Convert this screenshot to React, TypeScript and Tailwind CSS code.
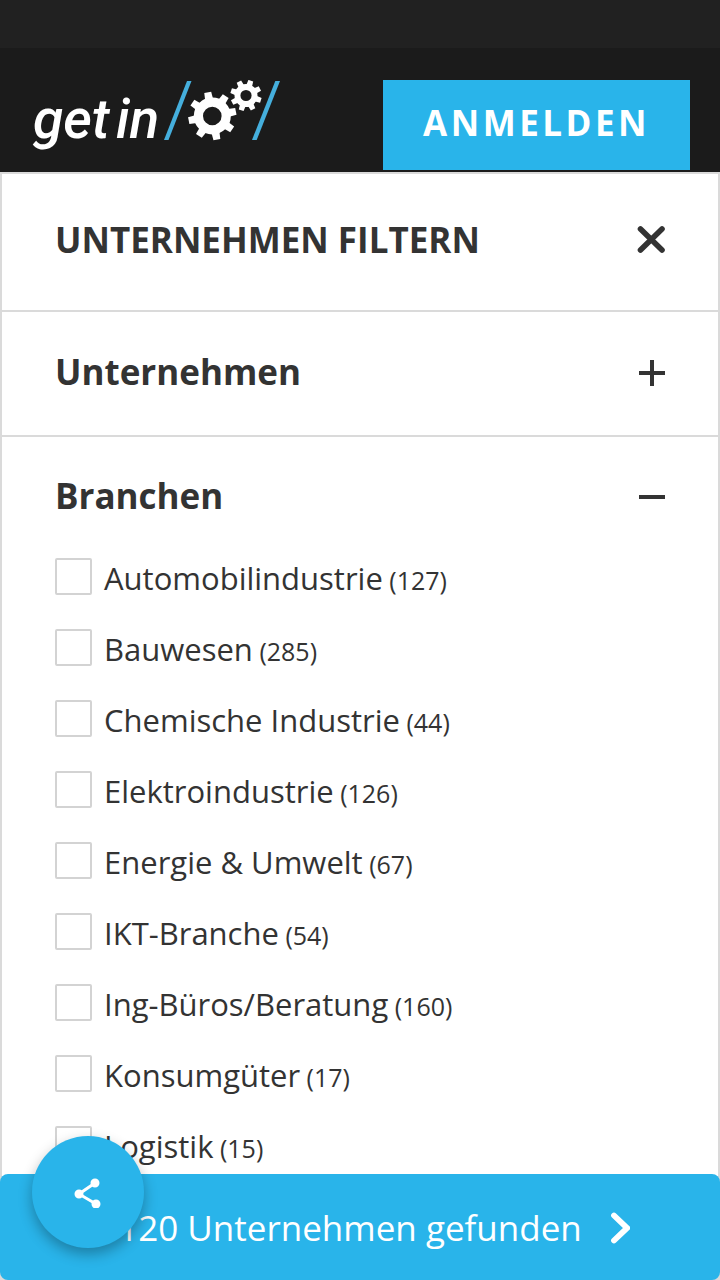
import { useState } from 'react'

interface Branch {
  name: string
  count: number
}

const branches: Branch[] = [
  { name: 'Automobilindustrie', count: 127 },
  { name: 'Bauwesen', count: 285 },
  { name: 'Chemische Industrie', count: 44 },
  { name: 'Elektroindustrie', count: 126 },
  { name: 'Energie & Umwelt', count: 67 },
  { name: 'IKT-Branche', count: 54 },
  { name: 'Ing-Büros/Beratung', count: 160 },
  { name: 'Konsumgüter', count: 17 },
  { name: 'Logistik', count: 15 },
]

interface GearProps {
  cx: number
  cy: number
  outer: number
  body: number
  hole: number
  tooth: number
  angle: number
}

function Gear({ cx, cy, outer, body, hole, tooth, angle }: GearProps) {
  const ring = (body + hole) / 2
  return (
    <g fill="#fff">
      <circle cx={cx} cy={cy} r={ring} fill="none" stroke="#fff" strokeWidth={body - hole} />
      {[0, 45, 90, 135, 180, 225, 270, 315].map((step) => (
        <polygon
          key={step}
          points={`${cx + body - 2},${cy - tooth / 2 - 0.5} ${cx + outer},${cy - tooth / 2} ${cx + outer},${cy + tooth / 2} ${cx + body - 2},${cy + tooth / 2 + 0.5}`}
          transform={`rotate(${angle + step} ${cx} ${cy})`}
        />
      ))}
    </g>
  )
}

function Logo() {
  return (
    <svg width="252" height="92" viewBox="30 80 252 92" role="img" aria-label="get in">
      <text
        y="138"
        fill="#fff"
        fontSize="55"
        fontStyle="italic"
        fontWeight="500"
        fontFamily="Roboto, sans-serif"
      >
        <tspan x="33">get</tspan> <tspan x="116">in</tspan>
      </text>
      <polygon points="187,81 191.5,81 168.5,140 164,140" fill="#45afdd" />
      <polygon points="275.3,81 280,81 256.7,140 252,140" fill="#45afdd" />
      <Gear cx={212.3} cy={116} outer={24} body={18.5} hole={9.3} tooth={7} angle={-11} />
      <Gear cx={246} cy={95.5} outer={15.6} body={11.5} hole={5.6} tooth={5} angle={-27} />
    </svg>
  )
}

function Toggle({ open }: { open: boolean }) {
  return (
    <svg width="28" height="28" viewBox="0 0 28 28" stroke="#333" strokeWidth="4" aria-hidden="true">
      <path d="M2 15H28" />
      {!open && <path d="M15 2V28" />}
    </svg>
  )
}

export default function App() {
  const [companiesOpen, setCompaniesOpen] = useState(false)
  const [branchesOpen, setBranchesOpen] = useState(true)

  return (
    <div className="flex min-h-screen flex-col bg-white font-['Open_Sans',sans-serif] text-[#333]">
      <div className="h-12 bg-[#212121]" />
      <header className="flex items-start justify-between bg-[#1b1b1b] px-[30px] pt-8">
        <a href="#">
          <Logo />
        </a>
        <button className="h-[90px] bg-[#29b4ea] px-10 pb-1 text-[35px] font-bold tracking-widest text-white">
          ANMELDEN
        </button>
      </header>

      <main className="flex-1 border-2 border-[#dadada]">
        <div className="flex items-center justify-between border-b-2 border-[#dadada] px-[53px] pt-[42px] pb-[46px]">
          <h1 className="text-[35px] leading-12 font-bold">UNTERNEHMEN FILTERN</h1>
          <button aria-label="Schließen">
            <svg width="28" height="28" viewBox="0 0 28 28" stroke="#333" strokeWidth="5.6" strokeLinecap="round">
              <path d="M3.5 3L25 24M25 3L3.5 24" />
            </svg>
          </button>
        </div>

        <section className="border-b-2 border-[#dadada]">
          <button
            className="flex w-full items-center justify-between px-[53px] pt-9 pb-[39px] text-left"
            aria-expanded={companiesOpen}
            onClick={() => setCompaniesOpen(!companiesOpen)}
          >
            <span className="text-[35px] leading-12 font-bold">Unternehmen</span>
            <Toggle open={companiesOpen} />
          </button>
        </section>

        <section>
          <button
            className="flex w-full items-center justify-between px-[53px] pt-[35px] pb-[21px] text-left"
            aria-expanded={branchesOpen}
            onClick={() => setBranchesOpen(!branchesOpen)}
          >
            <span className="text-[35px] leading-12 font-bold">Branchen</span>
            <Toggle open={branchesOpen} />
          </button>
          {branchesOpen && (
            <ul className="px-[53px]">
              {branches.map((branch) => (
                <li key={branch.name} className="h-[71px]">
                  <label className="flex h-full items-center gap-3">
                    <input
                      type="checkbox"
                      className="size-[37px] appearance-none rounded-xs border-2 border-[#d3d3d3] bg-white checked:bg-[#29b4ea]"
                    />
                    <span className="pt-1 text-[31px] leading-10">
                      {branch.name}
                      <span className="text-[25px]"> ({branch.count})</span>
                    </span>
                  </label>
                </li>
              ))}
            </ul>
          )}
        </section>
      </main>

      <button className="fixed inset-x-0 bottom-0 flex h-[106px] items-center justify-center gap-7 rounded-lg bg-[#29b4ea] pt-0.5 pl-7 text-[35px] text-white">
        <span>120 Unternehmen gefunden</span>
        <svg
          width="20"
          height="32"
          viewBox="0 0 20 32"
          fill="none"
          stroke="#fff"
          strokeWidth="5.8"
          strokeLinecap="round"
          aria-hidden="true"
        >
          <path d="M4 3.5L17 16L4 28.5" />
        </svg>
      </button>

      <button
        aria-label="Teilen"
        className="fixed bottom-8 left-8 flex size-28 items-center justify-center rounded-full bg-[#29b4ea] shadow-[0_6px_14px_rgba(0,0,0,0.3)]"
      >
        <svg width="28" height="32" viewBox="0 0 28 32" fill="#fff" stroke="#fff" strokeWidth="3" aria-hidden="true">
          <path d="M21 7L5 18L22 28" fill="none" />
          <circle cx="21" cy="7" r="3" />
          <circle cx="5" cy="18" r="3" />
          <circle cx="22" cy="28" r="3" />
        </svg>
      </button>
    </div>
  )
}
